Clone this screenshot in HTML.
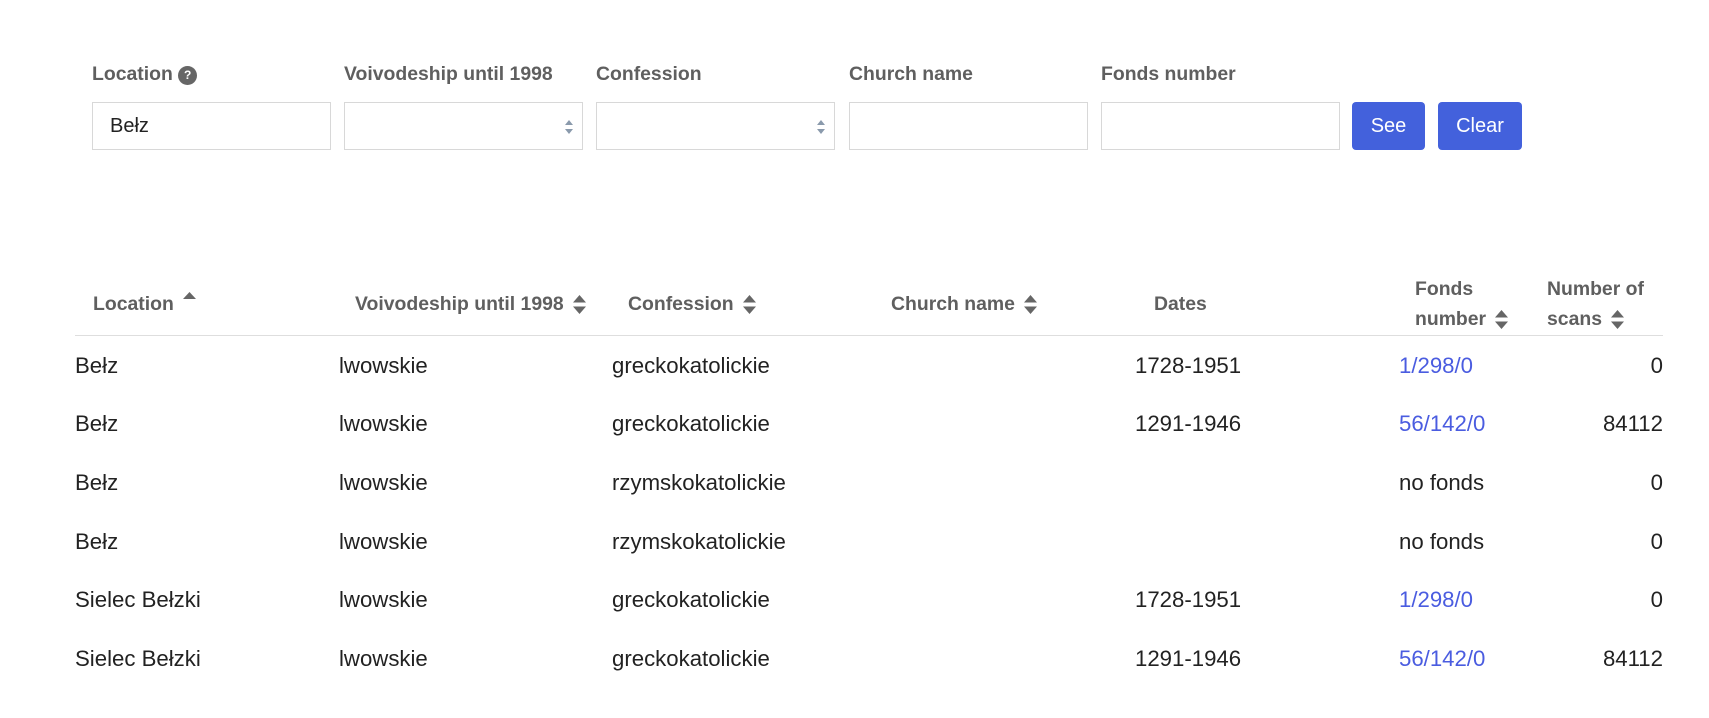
<!DOCTYPE html>
<html><head><meta charset="utf-8"><style>
*{box-sizing:border-box;margin:0;padding:0}
body{width:1709px;height:718px;background:#fff;font-family:"Liberation Sans",Arial,sans-serif;position:relative;overflow:hidden}
.a{position:absolute;white-space:nowrap}
.lbl{font-weight:bold;font-size:19.4px;color:#5f5f5f;top:63px}
.inp{position:absolute;top:102px;height:48px;border:1px solid #d8d8d8;background:#fff;font-size:20px;color:#222;padding:12px 0 0 17px}
.btn{position:absolute;top:102px;height:48px;background:#4361dc;border-radius:4px;color:#fff;font-size:20px;text-align:center;line-height:48px}
.hd{font-weight:bold;font-size:19.4px;color:#5f5f5f}
.td{font-size:22.2px;color:#222}
.lk{color:#4a5ce0}
.sort{display:inline-block;vertical-align:middle;margin-left:8px}
</style></head><body>
<div class="a lbl" style="left:92px">Location <span style="display:inline-block;width:19px;height:19px;border-radius:50%;background:#666;color:#fff;font-size:12px;text-align:center;line-height:19px;vertical-align:1px">?</span></div>
<div class="a lbl" style="left:344px">Voivodeship until 1998</div>
<div class="a lbl" style="left:596px">Confession</div>
<div class="a lbl" style="left:849px">Church name</div>
<div class="a lbl" style="left:1101px">Fonds number</div>
<div class="inp" style="left:92px;width:239px">Bełz</div>
<div class="inp" style="left:344px;width:239px"><svg style="position:absolute;right:8px;top:16px" width="10" height="16"><path d="M5 1L9 6H1Z M5 15L9 10H1Z" fill="#8a9aac"/></svg></div>
<div class="inp" style="left:596px;width:239px"><svg style="position:absolute;right:8px;top:16px" width="10" height="16"><path d="M5 1L9 6H1Z M5 15L9 10H1Z" fill="#8a9aac"/></svg></div>
<div class="inp" style="left:849px;width:239px"></div>
<div class="inp" style="left:1101px;width:239px"></div>
<div class="btn" style="left:1352px;width:73px">See</div>
<div class="btn" style="left:1438px;width:84px">Clear</div>

<div class="a hd" style="left:93px;top:293px">Location</div>
<svg class="a" style="left:182px;top:291px" width="15" height="9"><path d="M7.5 1L14 8H1Z" fill="#666"/></svg>
<div class="a hd" style="left:355px;top:293px">Voivodeship until 1998<svg class="sort" width="15" height="21"><path d="M7.5 1L14 8.5H1Z M7.5 20L14 12.5H1Z" fill="#666"/></svg></div>
<div class="a hd" style="left:628px;top:293px">Confession<svg class="sort" width="15" height="21"><path d="M7.5 1L14 8.5H1Z M7.5 20L14 12.5H1Z" fill="#666"/></svg></div>
<div class="a hd" style="left:891px;top:293px">Church name<svg class="sort" width="15" height="21"><path d="M7.5 1L14 8.5H1Z M7.5 20L14 12.5H1Z" fill="#666"/></svg></div>
<div class="a hd" style="left:1154px;top:293px">Dates</div>
<div class="a hd" style="left:1415px;top:274px;line-height:30px">Fonds<br>number<svg class="sort" width="15" height="21"><path d="M7.5 1L14 8.5H1Z M7.5 20L14 12.5H1Z" fill="#666"/></svg></div>
<div class="a hd" style="left:1547px;top:274px;line-height:30px">Number of<br>scans<svg class="sort" width="15" height="21"><path d="M7.5 1L14 8.5H1Z M7.5 20L14 12.5H1Z" fill="#666"/></svg></div>
<div class="a" style="left:75px;top:335px;width:1588px;height:1px;background:#dedede"></div>

<div class="a td" style="left:75px;top:353px">Bełz</div><div class="a td" style="left:339px;top:353px">lwowskie</div><div class="a td" style="left:612px;top:353px">greckokatolickie</div><div class="a td" style="left:1135px;top:353px">1728-1951</div><div class="a td lk" style="left:1399px;top:353px">1/298/0</div><div class="a td" style="right:46px;top:353px">0</div>
<div class="a td" style="left:75px;top:411px">Bełz</div><div class="a td" style="left:339px;top:411px">lwowskie</div><div class="a td" style="left:612px;top:411px">greckokatolickie</div><div class="a td" style="left:1135px;top:411px">1291-1946</div><div class="a td lk" style="left:1399px;top:411px">56/142/0</div><div class="a td" style="right:46px;top:411px">84112</div>
<div class="a td" style="left:75px;top:470px">Bełz</div><div class="a td" style="left:339px;top:470px">lwowskie</div><div class="a td" style="left:612px;top:470px">rzymskokatolickie</div><div class="a td" style="left:1399px;top:470px">no fonds</div><div class="a td" style="right:46px;top:470px">0</div>
<div class="a td" style="left:75px;top:529px">Bełz</div><div class="a td" style="left:339px;top:529px">lwowskie</div><div class="a td" style="left:612px;top:529px">rzymskokatolickie</div><div class="a td" style="left:1399px;top:529px">no fonds</div><div class="a td" style="right:46px;top:529px">0</div>
<div class="a td" style="left:75px;top:587px">Sielec Bełzki</div><div class="a td" style="left:339px;top:587px">lwowskie</div><div class="a td" style="left:612px;top:587px">greckokatolickie</div><div class="a td" style="left:1135px;top:587px">1728-1951</div><div class="a td lk" style="left:1399px;top:587px">1/298/0</div><div class="a td" style="right:46px;top:587px">0</div>
<div class="a td" style="left:75px;top:646px">Sielec Bełzki</div><div class="a td" style="left:339px;top:646px">lwowskie</div><div class="a td" style="left:612px;top:646px">greckokatolickie</div><div class="a td" style="left:1135px;top:646px">1291-1946</div><div class="a td lk" style="left:1399px;top:646px">56/142/0</div><div class="a td" style="right:46px;top:646px">84112</div>
</body></html>
